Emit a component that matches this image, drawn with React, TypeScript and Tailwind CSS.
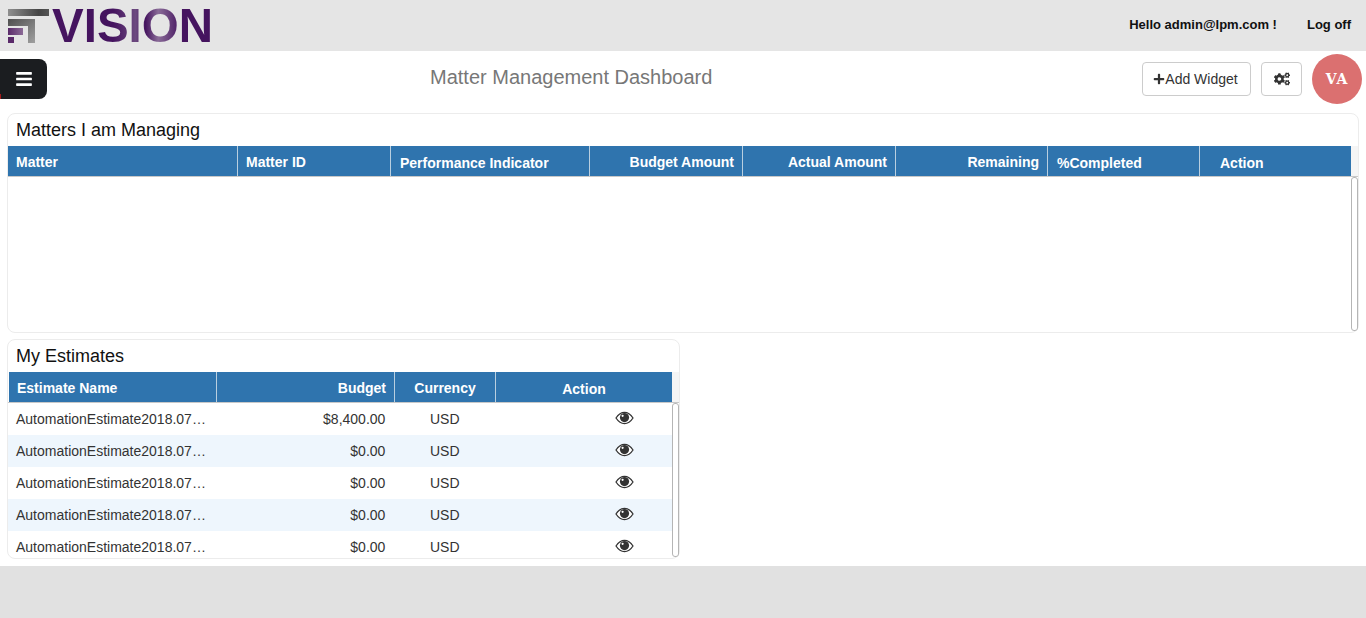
import { FaBars, FaCogs, FaPlus } from 'react-icons/fa';

const matterColumns = [
  { label: 'Matter', width: 'w-[230px]', align: 'text-left pl-2', shift: '' },
  { label: 'Matter ID', width: 'w-[153px]', align: 'text-left pl-2', shift: '' },
  { label: 'Performance Indicator', width: 'w-[199px]', align: 'text-left pl-[9px]', shift: 'pt-px' },
  { label: 'Budget Amount', width: 'w-[153px]', align: 'text-right pr-2', shift: '' },
  { label: 'Actual Amount', width: 'w-[153px]', align: 'text-right pr-2', shift: '' },
  { label: 'Remaining', width: 'w-[152px]', align: 'text-right pr-2', shift: '' },
  { label: '%Completed', width: 'w-[152px]', align: 'text-left pl-[9px]', shift: 'pt-px' },
  { label: 'Action', width: 'w-[151px]', align: 'text-left pl-5', shift: 'pt-px' },
];

const estimates = [
  { budget: '$8,400.00' },
  { budget: '$0.00' },
  { budget: '$0.00' },
  { budget: '$0.00' },
  { budget: '$0.00' },
];

function Logo() {
  return (
    <div className="flex items-start pl-2 pt-2">
      <svg width="42" height="35" viewBox="0 0 42 35" className="shrink-0">
        <defs>
          <linearGradient id="bar" x1="0" x2="1" y1="0" y2="0">
            <stop offset="0" stopColor="#8f8f8f" />
            <stop offset="0.75" stopColor="#444444" />
            <stop offset="1" stopColor="#555555" />
          </linearGradient>
          <linearGradient id="bar2" x1="0" x2="1" y1="0" y2="1">
            <stop offset="0" stopColor="#4f4f4f" />
            <stop offset="1" stopColor="#a0a0a0" />
          </linearGradient>
          <linearGradient id="accent" x1="0" x2="1" y1="0" y2="0">
            <stop offset="0" stopColor="#5a2a6a" />
            <stop offset="1" stopColor="#8b6a96" />
          </linearGradient>
        </defs>
        <rect x="0" y="0" width="41" height="7" fill="url(#bar)" />
        <path d="M0 10H27V34H20V17H0Z" fill="url(#bar2)" />
        <rect x="0" y="19" width="15" height="7" fill="url(#accent)" />
        <rect x="0" y="28" width="6" height="6" fill="#5a2a6a" />
      </svg>
      <span className="ml-[2px] -mt-[8px] bg-[linear-gradient(90deg,#45145f_0%,#45145f_38%,#6d4a80_52%,#45145f_58%,#8a6c98_66%,#45145f_80%,#45145f_100%)] bg-clip-text font-['Liberation_Sans',sans-serif] text-[47.5px] leading-[50px] font-bold text-transparent">
        VISION
      </span>
    </div>
  );
}

function EyeIcon() {
  return (
    <svg width="19" height="14" viewBox="0 0 19 14">
      <path d="M1 7C3.5 3.2 6.3 1.3 9.5 1.3S15.5 3.2 18 7C15.5 10.8 12.7 12.7 9.5 12.7S3.5 10.8 1 7Z" fill="#fff" stroke="#333" strokeWidth="1.3" />
      <circle cx="9.5" cy="6.6" r="4.6" fill="#333" />
      <circle cx="7.6" cy="4.8" r="1.1" fill="#fff" />
    </svg>
  );
}

function Scrollbar() {
  return <div className="h-full w-[7px] rounded-[3px] border border-[#b5b5b5] bg-white" />;
}

export default function App() {
  return (
    <div className="flex min-h-screen flex-col bg-[#e1e1e1] font-['Liberation_Sans',sans-serif] text-[#333]">
      <header className="flex h-[51px] items-center justify-between bg-[#e5e5e5]">
        <Logo />
        <div className="flex items-center pb-[2px] pr-[15px] text-[13px] font-bold text-[#111]">
          <span className="mr-[30px]">Hello admin@lpm.com !</span>
          <span>Log off</span>
        </div>
      </header>

      <main className="bg-white px-[7px] pb-[7px]">
        <div className="relative -mx-[7px] flex h-[62px] items-start">
          <button className="relative mt-2 flex h-10 w-[47px] items-center justify-center rounded-r-lg bg-[#1b1d20] text-white">
            <FaBars className="size-[18px]" />
            <span className="absolute bottom-0 left-0 h-[5px] w-px bg-[#a51c1c]" />
          </button>
          <h1 className="ml-[383px] mt-[14px] text-xl leading-6 text-[#777]">Matter Management Dashboard</h1>
          <div className="ml-auto mt-[3px] flex items-start pr-1">
            <button className="mt-2 flex h-[34px] w-[109px] items-center justify-center rounded border border-[#ccc] bg-white pr-[2px] text-sm">
              <FaPlus className="size-3" />
              Add Widget
            </button>
            <button className="ml-[10px] mt-2 flex h-[34px] w-[41px] items-center justify-center rounded border border-[#ccc] bg-white">
              <FaCogs className="size-4" />
            </button>
            <div className="ml-[10px] flex size-[50px] items-center justify-center rounded-full bg-[#db7070] text-sm font-bold tracking-[1px] text-white [font-family:'DejaVu_Serif',serif]">
              VA
            </div>
          </div>
        </div>

        <section className="flex h-[220px] w-[1352px] flex-col rounded-lg border border-[#ececec]">
          <h2 className="h-8 pl-2 pt-[3px] text-lg leading-[26px] text-[#111]">Matters I am Managing</h2>
          <div className="flex h-[31px] border-b border-[#c8c8c8]">
            <div className="flex overflow-hidden bg-[#2f74ae] text-sm font-bold text-white">
              {matterColumns.map((col) => (
                <div
                  key={col.label}
                  className={`${col.width} ${col.align} ${col.shift} border-r border-[#b9cfe0] leading-[32px] last:border-r-0`}
                >
                  {col.label}
                </div>
              ))}
            </div>
            <div className="flex-1 bg-[#f5f5f5]" />
          </div>
          <div className="flex flex-1 justify-end pb-px">
            <Scrollbar />
          </div>
        </section>

        <section className="mt-[6px] flex h-[220px] w-[673px] flex-col rounded-lg border border-[#ececec]">
          <h2 className="h-8 pl-2 pt-[3px] text-lg leading-[26px] text-[#111]">My Estimates</h2>
          <div className="flex h-[31px] border-b border-[#c8c8c8] pl-px">
            <div className="flex overflow-hidden bg-[#2f74ae] text-sm font-bold text-white">
              <div className="w-[208px] border-r border-[#b9cfe0] pl-2 leading-[32px]">Estimate Name</div>
              <div className="w-[178px] border-r border-[#b9cfe0] pr-2 text-right leading-[32px]">Budget</div>
              <div className="w-[101px] border-r border-[#b9cfe0] text-center leading-[32px]">Currency</div>
              <div className="w-[176px] pt-px text-center leading-[32px]">Action</div>
            </div>
            <div className="flex-1 bg-[#f5f5f5]" />
          </div>
          <div className="flex min-h-0 flex-1">
            <div className="w-[665px] overflow-hidden text-sm">
              {estimates.map((row, i) => (
                <div key={i} className="flex h-8 items-center even:bg-[#eef6fd]">
                  <div className="w-[209px] whitespace-nowrap pl-2">AutomationEstimate2018.07…</div>
                  <div className="w-[169px] text-right">{row.budget}</div>
                  <div className="w-[119px] text-center">USD</div>
                  <div className="flex w-[168px] justify-center pb-[2px] pl-[72px]">
                    <EyeIcon />
                  </div>
                </div>
              ))}
            </div>
            <div className="pb-px">
              <Scrollbar />
            </div>
          </div>
        </section>
      </main>

      <footer className="flex-1 bg-[#e1e1e1]" />
    </div>
  );
}
